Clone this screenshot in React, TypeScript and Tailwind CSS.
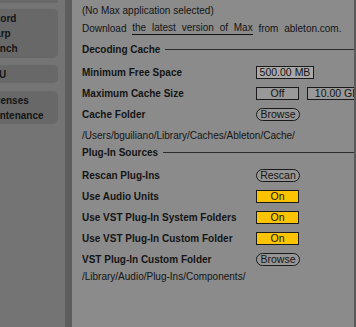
const font = { fontFamily: '"Liberation Sans", Arial, sans-serif' };

function Row({ label, children }: { label: string; children?: React.ReactNode }) {
  return (
    <div className="flex items-center h-[21px]">
      <div className="w-[174px] shrink-0 font-bold text-[10px] text-[#141414] whitespace-nowrap">{label}</div>
      <div className="flex items-center gap-2">{children}</div>
    </div>
  );
}

function Box({ children, w, bg = "bg-[#a3a3a3]" }: { children: React.ReactNode; w: string; bg?: string }) {
  return (
    <div className={`${w} ${bg} h-[13px] border border-[#1a1a1a] flex items-center justify-center text-[10.5px] leading-none text-[#141414] shrink-0`}>
      {children}
    </div>
  );
}

function Pill({ children }: { children: React.ReactNode }) {
  return (
    <div className="w-[44px] h-[13px] rounded-full border border-[#1a1a1a] bg-[#969696] flex items-center justify-center text-[10.5px] leading-none text-[#141414]">
      {children}
    </div>
  );
}

function Section({ title }: { title: string }) {
  return (
    <div className="flex items-center h-[13px]">
      <span className="font-bold text-[10px] text-[#141414] whitespace-nowrap">{title}</span>
      <div className="flex-1 h-px bg-[#2c2c2c] ml-[5px]" />
    </div>
  );
}

function Tab({ children, h, mt }: { children: React.ReactNode; h: string; mt: string }) {
  return (
    <div className={`${h} ${mt} w-[58px] bg-[#686868] rounded-r-[5px] flex flex-col justify-center text-[10px] font-bold text-[#141414] leading-[15px] whitespace-nowrap overflow-hidden`}>
      {children}
    </div>
  );
}

export default function App() {
  return (
    <div className="w-[356px] h-[327px] flex overflow-hidden bg-[#8b8b8b]" style={font}>
      {/* sidebar */}
      <div className="w-[65px] shrink-0 bg-[#747474] flex flex-col">
        <Tab h="h-[3px]" mt="mt-0">{null}</Tab>
        <Tab h="h-[49px]" mt="mt-[6px]">
          <div className="-ml-[18px]">Record</div>
          <div className="-ml-[14px]">Warp</div>
          <div className="-ml-[18px]">Launch</div>
        </Tab>
        <Tab h="h-[18px]" mt="mt-[7px]">
          <div className="-ml-[15px]">CPU</div>
        </Tab>
        <Tab h="h-[33px]" mt="mt-[8px]">
          <div className="-ml-[14px]">Licenses</div>
          <div className="-ml-[17px]">Maintenance</div>
        </Tab>
      </div>
      <div className="w-[7px] shrink-0 bg-[#5d5d5d]" />
      {/* main */}
      <div className="flex-1 min-w-0 overflow-hidden pl-[10px] pt-[1px] text-[#141414]">
        <div className="text-[10px] h-[18px] flex items-center whitespace-nowrap">(No Max application selected)</div>
        <div className="text-[10px] h-[18px] flex items-center whitespace-nowrap [word-spacing:3px]">
          Download&nbsp;
          <span className="border-b border-[#111] leading-[12px]">the latest version of Max</span>
          &nbsp;from ableton.com.
        </div>
        <div className="mt-[6px]">
          <Section title="Decoding Cache" />
        </div>
        <div className="mt-[6px]">
          <Row label="Minimum Free Space">
            <Box w="w-[58px]" bg="bg-[#a9a9a9]">500.00 MB</Box>
          </Row>
          <Row label="Maximum Cache Size">
            <Box w="w-[43px]" bg="bg-[#999999]">Off</Box>
            <Box w="w-[60px]" bg="bg-[#999999]">10.00 GB</Box>
          </Row>
          <Row label="Cache Folder">
            <Pill>Browse</Pill>
          </Row>
          <div className="text-[10px] h-[21px] flex items-center whitespace-nowrap">/Users/bguiliano/Library/Caches/Ableton/Cache/</div>
        </div>
        <Section title="Plug-In Sources" />
        <div className="mt-[6px]">
          <Row label="Rescan Plug-Ins">
            <Pill>Rescan</Pill>
          </Row>
          <Row label="Use Audio Units">
            <Box w="w-[43px]" bg="bg-[#fcc400]">On</Box>
          </Row>
          <Row label="Use VST Plug-In System Folders">
            <Box w="w-[43px]" bg="bg-[#fcc400]">On</Box>
          </Row>
          <Row label="Use VST Plug-In Custom Folder">
            <Box w="w-[43px]" bg="bg-[#fcc400]">On</Box>
          </Row>
          <Row label="VST Plug-In Custom Folder">
            <Pill>Browse</Pill>
          </Row>
          <div className="text-[10px] h-[13px] flex items-center whitespace-nowrap">/Library/Audio/Plug-Ins/Components/</div>
        </div>
      </div>
      <div className="w-[2px] shrink-0 bg-[#5a5a5a]" />
    </div>
  );
}
